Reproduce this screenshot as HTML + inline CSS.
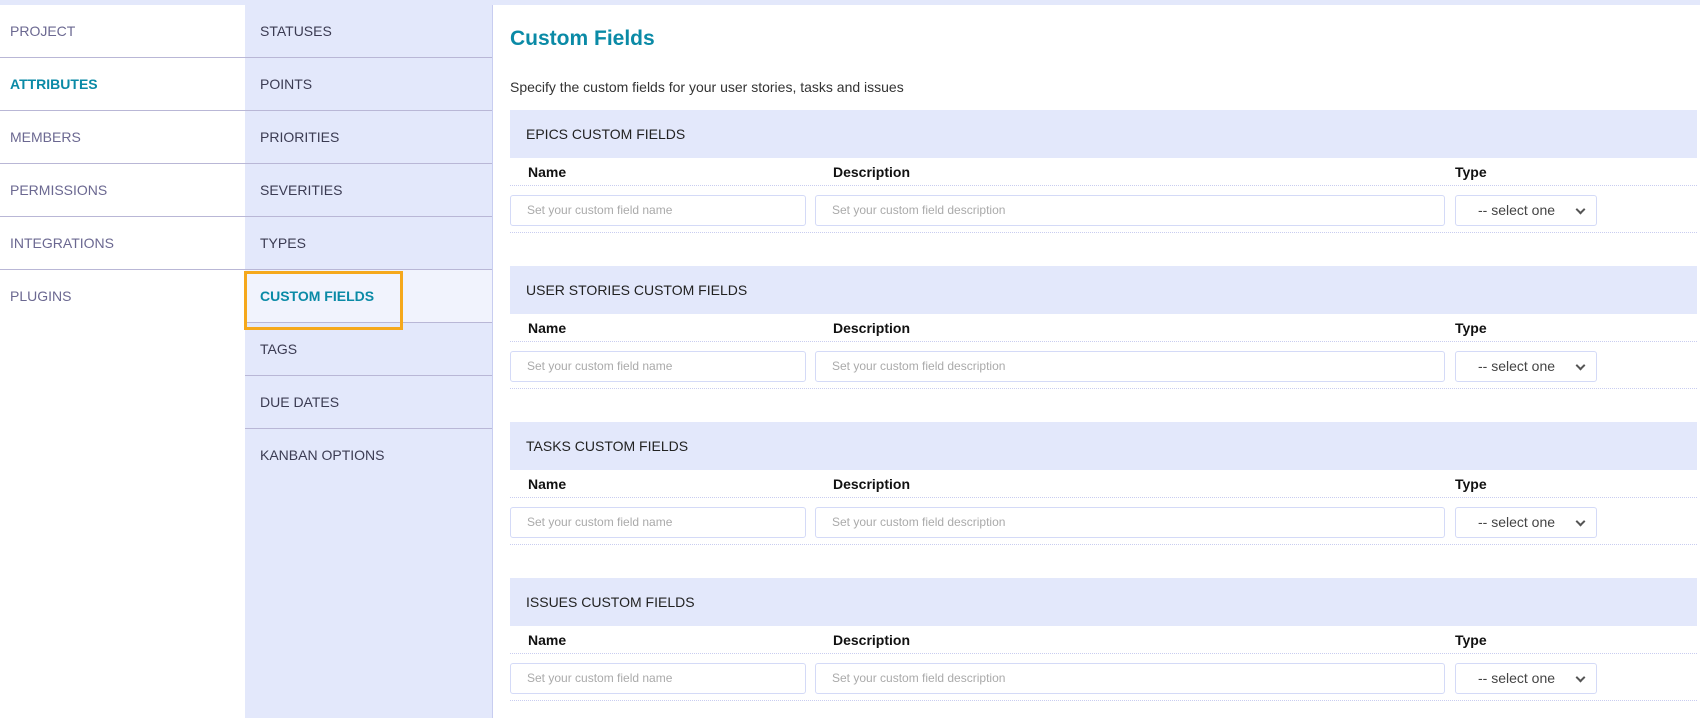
<!DOCTYPE html>
<html><head><style>
*{box-sizing:border-box;margin:0;padding:0}
body{width:1700px;height:718px;overflow:hidden;background:#fff;font-family:"Liberation Sans","DejaVu Sans",sans-serif;position:relative}
.top{position:absolute;left:0;top:0;width:1700px;height:5px;background:#e3e8fb}
.nav1{position:absolute;left:0;top:5px;width:245px}
.nav1 div{height:53px;line-height:53px;padding-left:10px;font-size:14px;color:#6b6891;border-bottom:1px solid #b9b7d6}
.nav1 div:last-child{border-bottom:none}
.nav1 .act{color:#0a8aa6;font-weight:bold}
.nav2{position:absolute;left:245px;top:5px;width:248px;height:713px;background:#e3e8fb;border-right:1px solid #c8cdf0}
.nav2 div{height:53px;line-height:53px;padding-left:15px;font-size:14px;color:#3b3b52;border-bottom:1px solid #b9b7d6}
.nav2 .sel{background:#f1f3fd;color:#0a8aa6;font-weight:bold;position:relative}
.nav2 .sel:after{content:"";position:absolute;left:-1px;top:1px;width:153px;height:53px;border:3px solid #f5a81c}
.main{position:absolute;left:510px;top:5px;width:1187px}
h1{font-size:21px;color:#0a8aa6;margin-top:22px;height:30px;font-weight:bold}
.sub{font-size:14px;color:#333;margin-top:22px;height:25px}
.bar{height:48px;background:#e3e8fb;line-height:48px;padding-left:16px;font-size:14px;color:#222}
.hd{height:28px;position:relative;border-bottom:1px dotted #c9cdf0;font-size:14px;font-weight:bold;color:#111}
.hd span{position:absolute;top:6px}
.row{height:47px;position:relative;border-bottom:1px dotted #c9cdf0}
.in{position:absolute;top:9px;height:31px;border:1px solid #d4daf7;border-radius:3px;font-size:12px;color:#aaa;line-height:29px;padding-left:16px}
.selb{position:absolute;top:9px;left:945px;width:142px;height:31px;border:1px solid #d4daf7;border-radius:3px;font-size:14px;color:#444;line-height:29px;padding-left:22px}
.selb:after{content:"";position:absolute;right:12px;top:10px;width:5px;height:5px;border-right:2px solid #555;border-bottom:2px solid #555;transform:rotate(45deg)}
.gap{height:33px}
</style></head><body>
<div class="top"></div>
<div class="nav1">
<div>PROJECT</div><div class="act">ATTRIBUTES</div><div>MEMBERS</div><div>PERMISSIONS</div><div>INTEGRATIONS</div><div>PLUGINS</div>
</div>
<div class="nav2">
<div>STATUSES</div><div>POINTS</div><div>PRIORITIES</div><div>SEVERITIES</div><div>TYPES</div><div class="sel">CUSTOM FIELDS</div><div>TAGS</div><div>DUE DATES</div><div style="border:none">KANBAN OPTIONS</div>
</div>
<div class="main">
<h1>Custom Fields</h1>
<div class="sub">Specify the custom fields for your user stories, tasks and issues</div>
<div style="height:6px"></div>
<div class="bar">EPICS CUSTOM FIELDS</div>
<div class="hd"><span style="left:18px">Name</span><span style="left:323px">Description</span><span style="left:945px">Type</span></div>
<div class="row"><div class="in" style="left:0;width:296px">Set your custom field name</div><div class="in" style="left:305px;width:630px">Set your custom field description</div><div class="selb">-- select one</div></div>
<div class="gap"></div>
<div class="bar">USER STORIES CUSTOM FIELDS</div>
<div class="hd"><span style="left:18px">Name</span><span style="left:323px">Description</span><span style="left:945px">Type</span></div>
<div class="row"><div class="in" style="left:0;width:296px">Set your custom field name</div><div class="in" style="left:305px;width:630px">Set your custom field description</div><div class="selb">-- select one</div></div>
<div class="gap"></div>
<div class="bar">TASKS CUSTOM FIELDS</div>
<div class="hd"><span style="left:18px">Name</span><span style="left:323px">Description</span><span style="left:945px">Type</span></div>
<div class="row"><div class="in" style="left:0;width:296px">Set your custom field name</div><div class="in" style="left:305px;width:630px">Set your custom field description</div><div class="selb">-- select one</div></div>
<div class="gap"></div>
<div class="bar">ISSUES CUSTOM FIELDS</div>
<div class="hd"><span style="left:18px">Name</span><span style="left:323px">Description</span><span style="left:945px">Type</span></div>
<div class="row"><div class="in" style="left:0;width:296px">Set your custom field name</div><div class="in" style="left:305px;width:630px">Set your custom field description</div><div class="selb">-- select one</div></div>
</div>
</body></html>
